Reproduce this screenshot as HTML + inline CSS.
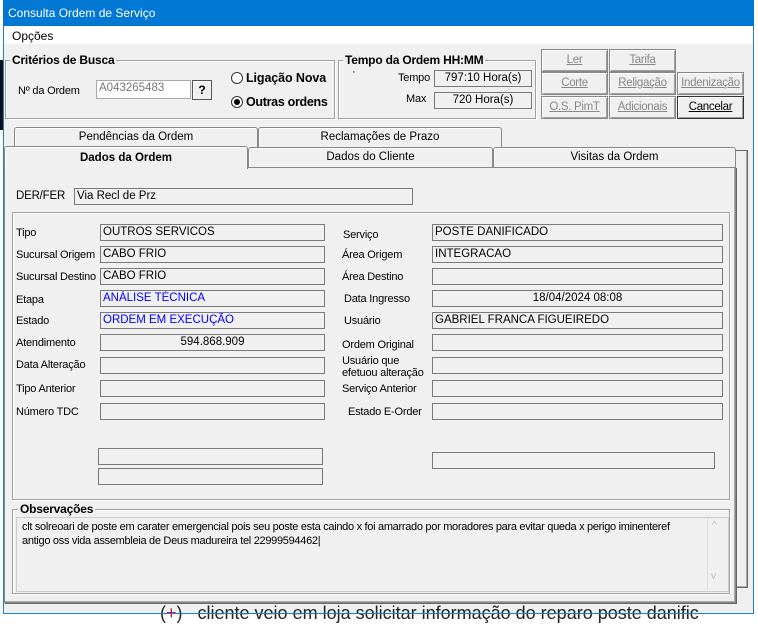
<!DOCTYPE html>
<html><head><meta charset="utf-8"><style>
*{box-sizing:border-box;margin:0;padding:0}
body{width:758px;height:618px;overflow:hidden;background:#fff;font-family:"Liberation Sans",sans-serif;font-size:11px;color:#000;position:relative}
.a{position:absolute;white-space:nowrap}
.win{position:absolute;left:3px;top:0;width:751px;height:614px;background:#f0f0f0;border:1px solid #1c7fd0}
.title{position:absolute;left:3px;top:0;width:751px;height:26px;background:#0078d4;color:#fff;font-size:12px;padding:6px 5px}
.menu{position:absolute;left:4px;top:26px;width:749px;height:18px;background:#fff;padding:3px 8px;font-size:12px}
.grp{position:absolute;border:1px solid #a0a0a0;box-shadow:inset 1px 1px 0 #fff,1px 1px 0 #fff}
.gt{position:absolute;background:#f0f0f0;font-weight:bold;padding:0 2px;top:-8px;left:4px;font-size:12px;letter-spacing:-0.2px}
.box{position:absolute;border:1px solid #7a7a7a;height:17px;padding:0 2px;line-height:15px;font-size:11.5px;background:#f0f0f0;white-space:nowrap;overflow:hidden}
.btn{position:absolute;width:67px;height:23px;border:1px solid #888;box-shadow:inset 1px 1px 0 #fff,inset -1px -1px 0 #a0a0a0;text-align:center;line-height:21px;color:#888;text-decoration:underline;font-size:11.5px;letter-spacing:-0.3px}
.tab{position:absolute;border:1px solid #888;border-bottom:none;border-radius:3px 3px 0 0;text-align:center;box-shadow:inset 1px 1px 0 #fff;background:#f0f0f0;font-size:11.5px;line-height:18px}
.lb{position:absolute;font-size:11px;white-space:nowrap;letter-spacing:-0.2px}
</style></head><body>
<div style="position:absolute;left:0;top:60px;width:3px;height:70px;background:#111"></div>
<div class="win"></div>
<div class="title">Consulta Ordem de Serviço</div>
<div class="menu">Opções</div>

<div class="grp" style="left:5px;top:60px;width:330px;height:59px"><span class="gt">Critérios de Busca</span></div>
<div class="lb" style="left:18px;top:85px">Nº da Ordem</div>
<div class="box" style="left:96px;top:80px;width:95px;height:19px;background:#fff;color:#777;border-color:#aaa">A043265483</div>
<div class="a" style="left:192px;top:80px;width:20px;height:20px;border:1px solid #555;box-shadow:inset 1px 1px 0 #fff;font-weight:bold;text-align:center;line-height:18px;font-size:12px">?</div>
<div class="a" style="left:231px;top:72px;width:12px;height:12px;border:1px solid #333;border-radius:50%;background:#fff"></div>
<div class="a" style="left:231px;top:96px;width:12px;height:12px;border:1px solid #333;border-radius:50%;background:#fff"><div style="margin:2px;width:6px;height:6px;border-radius:50%;background:#000"></div></div>
<div class="lb" style="left:246px;top:71px;font-weight:bold;font-size:12.5px;letter-spacing:-0.1px">Ligação Nova</div>
<div class="lb" style="left:246px;top:95px;font-weight:bold;font-size:12.5px;letter-spacing:-0.3px">Outras ordens</div>

<div class="grp" style="left:338px;top:60px;width:198px;height:59px"><span class="gt">Tempo da Ordem HH:MM</span></div>
<div class="lb" style="left:352px;top:66px">·</div>
<div class="lb" style="left:398px;top:72px">Tempo</div>
<div class="lb" style="left:406px;top:93px">Max</div>
<div class="box" style="left:434px;top:70px;width:98px;text-align:center">797:10 Hora(s)</div>
<div class="box" style="left:434px;top:92px;width:98px;text-align:center">720 Hora(s)</div>

<div class="btn" style="left:541px;top:49px">Ler</div>
<div class="btn" style="left:609px;top:49px">Tarifa</div>
<div class="btn" style="left:541px;top:72px">Corte</div>
<div class="btn" style="left:609px;top:72px">Religação</div>
<div class="btn" style="left:677px;top:72px">Indenização</div>
<div class="btn" style="left:541px;top:96px">O.S. PimT</div>
<div class="btn" style="left:609px;top:96px">Adicionais</div>
<div class="btn" style="left:677px;top:96px;color:#000;border-color:#333">Cancelar</div>

<div class="a" style="left:735px;top:150px;width:13px;height:438px;border:1px solid #666;border-left:none;background:#f0f0f0;box-shadow:inset -1px -1px 0 #aaa"></div>
<div class="tab" style="left:14px;top:127px;width:244px;height:20px">Pendências da Ordem</div>
<div class="tab" style="left:258px;top:127px;width:244px;height:20px">Reclamações de Prazo</div>
<div class="a" style="left:4px;top:167px;width:732px;height:436px;border:1px solid #888;border-top:none;background:#f0f0f0;box-shadow:inset -1px -1px 0 #aaa,1px 1px 0 #666"></div>
<div class="tab" style="left:248px;top:147px;width:245px;height:20px">Dados do Cliente</div>
<div class="tab" style="left:493px;top:147px;width:243px;height:20px">Visitas da Ordem</div>
<div class="tab" style="left:4px;top:146px;width:244px;height:23px;font-weight:bold;border-bottom:none;line-height:22px">Dados da Ordem</div>
<div class="a" style="left:248px;top:167px;width:488px;height:1px;background:#888"></div>

<div class="lb" style="left:16px;top:190px;font-size:11.5px">DER/FER</div>
<div class="box" style="left:74px;top:188px;width:339px">Via Recl de Prz</div>

<div class="grp" style="left:12px;top:212px;width:718px;height:288px"></div>
<div class="lb" style="left:16px;top:227px">Tipo</div>
<div class="lb" style="left:16px;top:249px">Sucursal Origem</div>
<div class="lb" style="left:16px;top:271px">Sucursal Destino</div>
<div class="lb" style="left:16px;top:294px">Etapa</div>
<div class="lb" style="left:16px;top:315px">Estado</div>
<div class="lb" style="left:16px;top:337px">Atendimento</div>
<div class="lb" style="left:16px;top:359px">Data Alteração</div>
<div class="lb" style="left:16px;top:383px">Tipo Anterior</div>
<div class="lb" style="left:16px;top:406px">Número TDC</div>
<div class="box" style="left:100px;top:224px;width:225px">OUTROS SERVICOS</div>
<div class="box" style="left:100px;top:246px;width:225px">CABO FRIO</div>
<div class="box" style="left:100px;top:268px;width:225px">CABO FRIO</div>
<div class="box" style="left:100px;top:290px;width:225px;color:#00f">ANÁLISE TÉCNICA</div>
<div class="box" style="left:100px;top:312px;width:225px;color:#00f">ORDEM EM EXECUÇÃO</div>
<div class="box" style="left:100px;top:334px;width:225px;text-align:center">594.868.909</div>
<div class="box" style="left:100px;top:357px;width:225px"></div>
<div class="box" style="left:100px;top:380px;width:225px"></div>
<div class="box" style="left:100px;top:403px;width:225px"></div>
<div class="box" style="left:98px;top:448px;width:225px"></div>
<div class="box" style="left:98px;top:468px;width:225px"></div>

<div class="lb" style="left:343px;top:229px">Serviço</div>
<div class="lb" style="left:342px;top:249px">Área Origem</div>
<div class="lb" style="left:342px;top:271px">Área Destino</div>
<div class="lb" style="left:344px;top:293px">Data Ingresso</div>
<div class="lb" style="left:344px;top:315px">Usuário</div>
<div class="lb" style="left:342px;top:339px">Ordem Original</div>
<div class="lb" style="left:342px;top:355px;line-height:12px">Usuário que<br>efetuou alteração</div>
<div class="lb" style="left:342px;top:383px">Serviço Anterior</div>
<div class="lb" style="left:348px;top:406px">Estado E-Order</div>
<div class="box" style="left:432px;top:224px;width:291px">POSTE DANIFICADO</div>
<div class="box" style="left:432px;top:246px;width:291px">INTEGRACAO</div>
<div class="box" style="left:432px;top:268px;width:291px"></div>
<div class="box" style="left:432px;top:290px;width:291px;text-align:center">18/04/2024 08:08</div>
<div class="box" style="left:432px;top:312px;width:291px">GABRIEL FRANCA FIGUEIREDO</div>
<div class="box" style="left:432px;top:334px;width:291px"></div>
<div class="box" style="left:432px;top:357px;width:291px"></div>
<div class="box" style="left:432px;top:380px;width:291px"></div>
<div class="box" style="left:432px;top:403px;width:291px"></div>
<div class="box" style="left:432px;top:452px;width:283px"></div>

<div class="grp" style="left:12px;top:509px;width:718px;height:85px"><span class="gt" style="left:5px">Observações</span></div>
<div class="a" style="left:16px;top:517px;width:713px;height:75px;border:1px solid #ccc;background:#f0f0f0"></div>
<div class="lb" style="left:22px;top:520px;font-size:11px;line-height:14px;letter-spacing:-0.3px">clt solreoari de poste em carater emergencial pois seu poste esta caindo x foi amarrado por moradores para evitar queda x perigo iminenteref<br>antigo oss vida assembleia de Deus madureira tel 22999594462|</div>
<div class="lb" style="left:712px;top:520px;color:#bbb;font-size:10px">^</div>
<div class="lb" style="left:711px;top:571px;color:#bbb;font-size:10px">v</div>
<div class="a" style="left:707px;top:518px;width:1px;height:72px;background:#ddd"></div>

<div class="lb" style="left:160px;top:603px;font-size:18px;color:#222;letter-spacing:0">(<span style="color:#c03">+</span>)&nbsp;&nbsp; cliente veio em loja solicitar informação do reparo poste danific</div>
<div class="a" style="left:3px;top:613px;width:751px;height:1px;background:#1c7fd0"></div>
</body></html>
